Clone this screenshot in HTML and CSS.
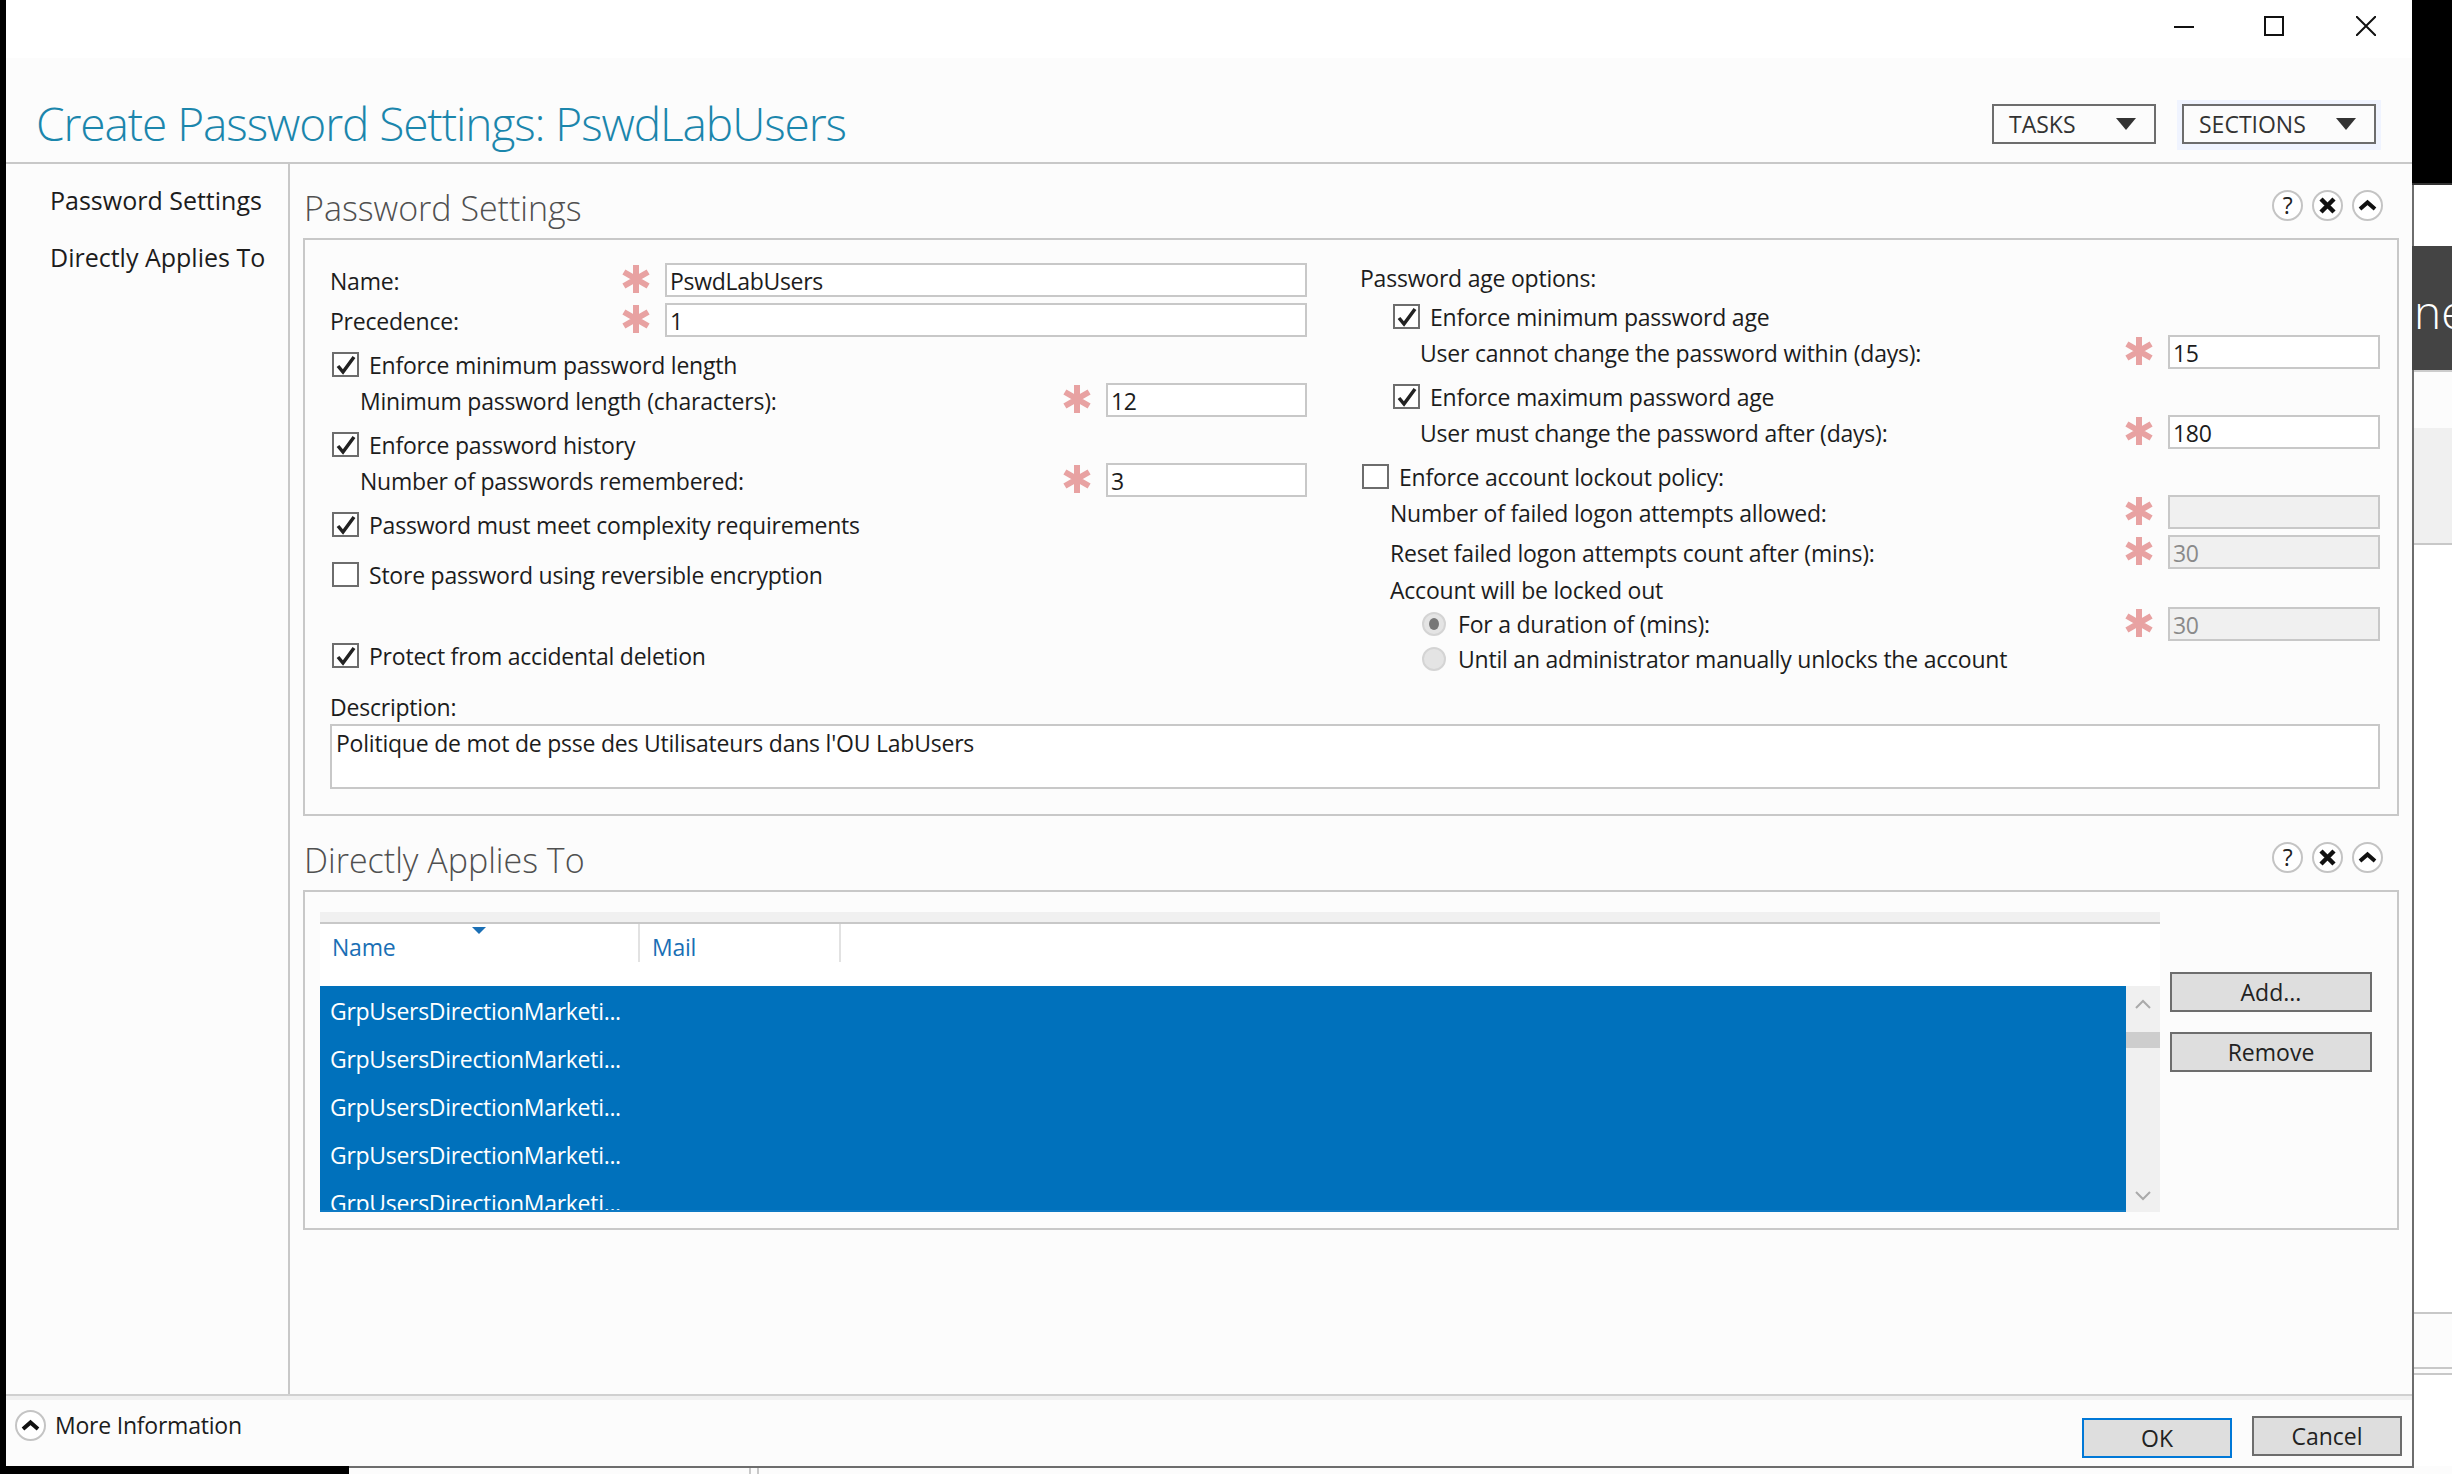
FILE: index.html
```html
<!DOCTYPE html>
<html lang="en">
<head>
    <meta charset="UTF-8">
    <title>Create Password Settings: PswdLabUsers</title>
    <link rel="stylesheet" href="styles.css">
</head>
<body>

<svg class="defs" aria-hidden="true">
    <symbol id="star" viewBox="0 0 28 28">
        <path d="M14 0V28M1.9 7L26.1 21M1.9 21L26.1 7" fill="none" stroke="#e8a2a2" stroke-width="6"/>
    </symbol>
    <symbol id="tick" viewBox="0 0 23 21">
        <path d="M4 12L9 18L20 3" fill="none" stroke="#222" stroke-width="3.5"/>
    </symbol>
    <symbol id="cross" viewBox="0 0 27 27">
        <path d="M7 7L20 20M20 7L7 20" fill="none" stroke="#111" stroke-width="4.5"/>
    </symbol>
    <symbol id="caret" viewBox="0 0 27 27">
        <path d="M6 17L13.5 10.5L21 17" fill="none" stroke="#111" stroke-width="4"/>
    </symbol>
</svg>

<div class="screen">
    <div class="top">
        <div class="window">
            <div class="titlebar">
                <svg class="ctl" viewBox="0 0 20 20"><path d="M0 11H20" stroke="#111" stroke-width="2"/></svg>
                <svg class="ctl" viewBox="0 0 20 20"><rect x="1" y="1" width="18" height="18" fill="none" stroke="#111" stroke-width="2"/></svg>
                <svg class="ctl close" viewBox="0 0 20 20"><path d="M0 0L20 20M20 0L0 20" stroke="#111" stroke-width="2"/></svg>
            </div>

            <div class="header">
                <h1 class="title">Create Password Settings: PswdLabUsers</h1>
                <div class="drop"><span>TASKS</span><i class="arrow"></i></div>
                <div class="drop focus"><span>SECTIONS</span><i class="arrow"></i></div>
            </div>

            <div class="main">
                <div class="sidebar">
                    <div class="side-item">Password Settings</div>
                    <div class="side-item">Directly Applies To</div>
                </div>

                <div class="content">
                    <div class="sec-head">
                        <h2>Password Settings</h2>
                        <div class="round"><span class="help">?</span></div>
                        <div class="round"><svg><use href="#cross"/></svg></div>
                        <div class="round"><svg><use href="#caret"/></svg></div>
                    </div>

                    <div class="panel form-panel">
                        <div class="cols">
                            <div class="col-left">
                                <div class="field">
                                    <label>Name:</label>
                                    <svg class="star"><use href="#star"/></svg>
                                    <input class="wide" type="text" value="PswdLabUsers">
                                </div>
                                <div class="field next">
                                    <label>Precedence:</label>
                                    <svg class="star"><use href="#star"/></svg>
                                    <input class="wide" type="text" value="1">
                                </div>
                                <div class="check"><span class="box"><svg><use href="#tick"/></svg></span>Enforce minimum password length</div>
                                <div class="field">
                                    <label class="sub">Minimum password length (characters):</label>
                                    <svg class="star"><use href="#star"/></svg>
                                    <input class="small" type="text" value="12">
                                </div>
                                <div class="check"><span class="box"><svg><use href="#tick"/></svg></span>Enforce password history</div>
                                <div class="field">
                                    <label class="sub">Number of passwords remembered:</label>
                                    <svg class="star"><use href="#star"/></svg>
                                    <input class="small" type="text" value="3">
                                </div>
                                <div class="check"><span class="box"><svg><use href="#tick"/></svg></span>Password must meet complexity requirements</div>
                                <div class="check store"><span class="box"></span>Store password using reversible encryption</div>
                                <div class="check protect"><span class="box"><svg><use href="#tick"/></svg></span>Protect from accidental deletion</div>
                            </div>

                            <div class="col-right">
                                <div class="plain">Password age options:</div>
                                <div class="check in1 first"><span class="box"><svg><use href="#tick"/></svg></span>Enforce minimum password age</div>
                                <div class="field">
                                    <label class="in2">User cannot change the password within (days):</label>
                                    <svg class="star"><use href="#star"/></svg>
                                    <input class="num" type="text" value="15">
                                </div>
                                <div class="check in1"><span class="box"><svg><use href="#tick"/></svg></span>Enforce maximum password age</div>
                                <div class="field">
                                    <label class="in2">User must change the password after (days):</label>
                                    <svg class="star"><use href="#star"/></svg>
                                    <input class="num" type="text" value="180">
                                </div>
                                <div class="check"><span class="box"></span>Enforce account lockout policy:</div>
                                <div class="field">
                                    <label class="in3">Number of failed logon attempts allowed:</label>
                                    <svg class="star"><use href="#star"/></svg>
                                    <input class="num" type="text" value="" disabled>
                                </div>
                                <div class="field next">
                                    <label class="in3">Reset failed logon attempts count after (mins):</label>
                                    <svg class="star"><use href="#star"/></svg>
                                    <input class="num" type="text" value="30" disabled>
                                </div>
                                <div class="plain in3 locked">Account will be locked out</div>
                                <div class="field">
                                    <label class="radio-label"><span class="radio on"></span>For a duration of (mins):</label>
                                    <svg class="star"><use href="#star"/></svg>
                                    <input class="num" type="text" value="30" disabled>
                                </div>
                                <div class="radio-label last"><span class="radio"></span>Until an administrator manually unlocks the account</div>
                            </div>
                        </div>

                        <div class="desc-label">Description:</div>
                        <div class="desc">Politique de mot de psse des Utilisateurs dans l'OU LabUsers</div>
                    </div>

                    <div class="sec-head">
                        <h2>Directly Applies To</h2>
                        <div class="round"><span class="help">?</span></div>
                        <div class="round"><svg><use href="#cross"/></svg></div>
                        <div class="round"><svg><use href="#caret"/></svg></div>
                    </div>

                    <div class="panel list-panel">
                        <div class="list">
                            <div class="list-strip"></div>
                            <div class="list-head">
                                <div class="col-name">Name<i class="sort"></i></div>
                                <div class="col-mail">Mail</div>
                            </div>
                            <div class="list-body">
                                <div class="rows">
                                    <div class="list-row">GrpUsersDirectionMarketi...</div>
                                    <div class="list-row">GrpUsersDirectionMarketi...</div>
                                    <div class="list-row">GrpUsersDirectionMarketi...</div>
                                    <div class="list-row">GrpUsersDirectionMarketi...</div>
                                    <div class="list-row">GrpUsersDirectionMarketi...</div>
                                </div>
                                <div class="scroll">
                                    <svg class="chev" viewBox="0 0 16 10"><path d="M1 9L8 2L15 9" fill="none" stroke="#aaa" stroke-width="2"/></svg>
                                    <div class="thumb"></div>
                                    <svg class="chev down" viewBox="0 0 16 10"><path d="M1 1L8 8L15 1" fill="none" stroke="#aaa" stroke-width="2"/></svg>
                                </div>
                            </div>
                        </div>
                        <div class="list-btns">
                            <button class="btn">Add...</button>
                            <button class="btn">Remove</button>
                        </div>
                    </div>
                </div>
            </div>

            <div class="footer">
                <div class="more">
                    <div class="round"><svg><use href="#caret"/></svg></div>
                    <span>More Information</span>
                </div>
                <button class="btn ok">OK</button>
                <button class="btn cancel">Cancel</button>
            </div>
        </div>

        <div class="behind">
            <div class="behind-black"></div>
            <div class="behind-lower">
                <div class="b-white"></div>
                <div class="b-dark">ne</div>
                <div class="b-pale"></div>
                <div class="b-gray"></div>
                <div class="b-line"></div>
                <div class="b-line2"></div>
                <div class="b-line3"></div>
            </div>
        </div>
    </div>

    <div class="strip">
        <div class="strip-black"></div>
        <div class="strip-rest"><i></i><i></i></div>
    </div>
</div>

</body>
</html>
```

FILE: styles.css
```css
* {
    box-sizing: border-box;
}
body {
    margin: 0;
    background-color: #fcfcfc;
    font-family: "Open Sans", "Noto Sans", sans-serif;
    font-size: 23px;
    letter-spacing: -0.22px;
    color: #1c1c1c;
}
.defs {
    position: absolute;
    width: 0;
    height: 0;
}
.screen {
    width: 2452px;
    height: 1474px;
    overflow: hidden;
}
.top {
    display: flex;
    height: 1466px;
}

/* window */
.window {
    width: 2412px;
    display: flex;
    flex-direction: column;
    border-left: 6px solid #000;
    background-color: #fcfcfc;
}
.titlebar {
    height: 58px;
    background-color: #fff;
    display: flex;
    justify-content: flex-end;
    align-items: flex-start;
    gap: 70px;
    padding: 16px 36px 0 0;
}
.ctl {
    width: 20px;
    height: 20px;
}
.ctl.close {
    margin-left: 2px;
}
.header {
    height: 106px;
    border-bottom: 2px solid #c8c8c8;
    display: flex;
    align-items: center;
    padding: 28px 36px 0 30px;
    gap: 26px;
}
.title {
    flex: 1;
    margin: -2px 0 0;
    font-size: 46px;
    font-weight: 300;
    letter-spacing: -1.07px;
    color: #1b86ac;
}
.drop {
    height: 40px;
    display: flex;
    align-items: center;
    justify-content: space-between;
    padding: 0 18px 0 15px;
    border: 2px solid #6d6d6d;
    font-size: 23px;
    letter-spacing: 0;
    color: #333;
}
.drop:first-of-type {
    width: 164px;
}
.drop.focus {
    width: 194px;
    box-shadow: 0 1px 0 5px #f0f4ff;
}
.arrow {
    width: 0;
    height: 0;
    border-left: 10px solid transparent;
    border-right: 10px solid transparent;
    border-top: 12px solid #333;
}

/* left nav + sections */
.main {
    flex: 1;
    display: flex;
    min-height: 0;
}
.sidebar {
    width: 284px;
    border-right: 2px solid #c8c8c8;
    padding: 8px 0 0 44px;
}
.side-item {
    height: 57px;
    line-height: 56px;
    font-size: 25px;
    letter-spacing: 0;
    white-space: nowrap;
}
.content {
    flex: 1;
    padding: 0 13px;
}
.sec-head {
    height: 74px;
    display: flex;
    align-items: flex-end;
    gap: 9px;
    padding: 0 16px 17px 1px;
}
.sec-head h2 {
    flex: 1;
    margin: 0 0 -10px;
    font-size: 34px;
    font-weight: 300;
    letter-spacing: 0;
    color: #505050;
}
.round {
    width: 31px;
    height: 31px;
    border-radius: 50%;
    border: 2px solid #c4c4c4;
    background-color: #fff;
    display: flex;
    align-items: center;
    justify-content: center;
}
.round svg {
    width: 27px;
    height: 27px;
}
.help {
    font-size: 23px;
    line-height: 1;
    color: #222;
}
.panel {
    border: 2px solid #c8c8c8;
}

/* form */
.form-panel {
    height: 578px;
    padding: 23px 17px 0 25px;
}
.cols {
    display: flex;
    justify-content: space-between;
}
.col-left {
    width: 977px;
}
.col-right {
    width: 1020px;
}
.field {
    height: 34px;
    display: flex;
    align-items: center;
}
.field.next {
    margin-top: 6px;
}
.field label {
    flex: 1;
    white-space: nowrap;
    padding-top: 2px;
}
.field .sub {
    padding-left: 30px;
}
.field .in2 {
    padding-left: 60px;
}
.field .in3 {
    padding-left: 30px;
}
.field .radio-label {
    padding-top: 0;
    padding-left: 62px;
}
.star {
    width: 28px;
    height: 28px;
    margin-right: 15px;
    margin-top: -2px;
}
input {
    height: 34px;
    border: 2px solid #c8c8c8;
    background-color: #fff;
    padding: 2px 3px 0;
    font-family: inherit;
    font-size: 23px;
    letter-spacing: -0.3px;
    color: #1c1c1c;
}
input:disabled {
    background-color: #f0f0f0;
    color: #8a8a8a;
}
.wide {
    width: 642px;
}
.small {
    width: 201px;
}
.num {
    width: 212px;
}
.check {
    height: 25px;
    display: flex;
    align-items: center;
    margin: 15px 0 6px 2px;
    white-space: nowrap;
}
.check.store {
    margin-top: 25px;
}
.check.protect {
    margin-top: 56px;
    margin-bottom: 0;
}
.box {
    width: 27px;
    height: 25px;
    border: 2px solid #6d6d6d;
    background-color: #fff;
    margin-right: 10px;
    flex-shrink: 0;
}
.box svg {
    display: block;
    width: 23px;
    height: 21px;
}
.plain {
    height: 30px;
    line-height: 30px;
    white-space: nowrap;
}
.check.in1 {
    margin-left: 33px;
}
.check.first {
    margin-top: 11px;
}
.plain.in3 {
    padding-left: 30px;
}
.plain.locked {
    margin: 6px 0 2px;
}
.radio-label {
    display: flex;
    align-items: center;
    padding-left: 62px;
    white-space: nowrap;
}
.radio-label.last {
    height: 28px;
    margin-top: 4px;
}
.radio {
    width: 24px;
    height: 24px;
    border-radius: 50%;
    background-color: #e4e4e4;
    border: 2px solid #d4d4d4;
    margin-right: 12px;
    flex-shrink: 0;
    display: flex;
    align-items: center;
    justify-content: center;
}
.radio.on::after {
    content: "";
    width: 10px;
    height: 12px;
    border-radius: 50%;
    background-color: #777;
}
.desc-label {
    height: 30px;
    line-height: 30px;
    margin-top: 19px;
}
.desc {
    height: 65px;
    margin-top: 2px;
    padding: 1px 4px;
    border: 2px solid #c8c8c8;
    background-color: #fff;
    white-space: nowrap;
}

/* members list */
.list-panel {
    height: 340px;
    display: flex;
    padding: 20px 0 0 15px;
}
.list {
    width: 1840px;
    height: 300px;
    display: flex;
    flex-direction: column;
}
.list-strip {
    height: 12px;
    background-color: #f0f0f0;
    border-bottom: 2px solid #c8c8c8;
}
.list-head {
    height: 62px;
    background-color: #fff;
    display: flex;
    align-items: flex-start;
    color: #1a6fb5;
}
.col-name,
.col-mail {
    position: relative;
    height: 38px;
    line-height: 46px;
    border-right: 2px solid #e2e2e2;
}
.col-name {
    width: 320px;
    padding-left: 12px;
}
.col-mail {
    width: 201px;
    padding-left: 12px;
}
.sort {
    position: absolute;
    left: 152px;
    top: 3px;
    width: 0;
    height: 0;
    border-left: 7px solid transparent;
    border-right: 7px solid transparent;
    border-top: 7px solid #1a6fb5;
}
.list-body {
    flex: 1;
    min-height: 0;
    display: flex;
}
.rows {
    flex: 1;
    overflow: hidden;
    padding: 1px 0 0 10px;
    background-color: #0071bc;
    border-bottom: 2px solid #0d7ac4;
    color: #fff;
    letter-spacing: -0.3px;
}
.list-row {
    height: 48px;
    line-height: 48px;
    white-space: nowrap;
}
.scroll {
    width: 34px;
    background-color: #f0f0f0;
    display: flex;
    flex-direction: column;
    align-items: center;
}
.chev {
    width: 16px;
    height: 10px;
    margin: 13px 0 23px;
}
.chev.down {
    margin: auto 0 11px;
}
.thumb {
    width: 100%;
    height: 16px;
    background-color: #cdcdcd;
}
.list-btns {
    margin: 60px 0 0 10px;
    display: flex;
    flex-direction: column;
    gap: 20px;
}
.btn {
    width: 202px;
    height: 40px;
    padding: 0;
    border: 2px solid #6d6d6d;
    background-color: #dedede;
    font-family: inherit;
    font-size: 23px;
    color: #222;
}

/* footer */
.footer {
    height: 72px;
    border-top: 2px solid #d0d0d0;
    box-shadow: inset 0 4px 0 #f0f0f0;
    display: flex;
    align-items: flex-start;
    padding: 20px 10px 0 0;
}
.more {
    flex: 1;
    margin: -7px 0 0 9px;
    display: flex;
    align-items: center;
    gap: 9px;
}
.btn.ok {
    width: 150px;
    margin-top: 2px;
    border-color: #0078d7;
}
.btn.cancel {
    width: 150px;
    margin-left: 20px;
}

/* what shows behind the window */
.behind {
    flex: 1;
    display: flex;
    flex-direction: column;
    overflow: hidden;
}
.behind-black {
    height: 185px;
    background-color: #000;
    border-bottom: 2px solid #333;
}
.behind-lower {
    flex: 1;
    border-left: 2px solid #6d6d6d;
    background-color: #fff;
}
.b-white {
    height: 61px;
}
.b-dark {
    height: 124px;
    background-color: #444;
    margin-left: -2px;
    padding-left: 2px;
    font-size: 46px;
    font-weight: 300;
    letter-spacing: 0;
    line-height: 130px;
    color: #fff;
    white-space: nowrap;
    overflow: hidden;
}
.b-pale {
    height: 58px;
    border-top: 2px solid #ccc;
    background-color: #fcfcfc;
}
.b-gray {
    height: 117px;
    background-color: #f0f0f0;
    border-bottom: 2px solid #c8c8c8;
}
.b-line {
    height: 769px;
    border-bottom: 2px solid #c8c8c8;
}
.b-line2 {
    height: 55px;
    background-color: #fcfcfc;
    border-bottom: 2px solid #c8c8c8;
}
.b-line3 {
    height: 6px;
    background-color: #fcfcfc;
    border-bottom: 2px solid #c8c8c8;
}

/* bottom edge */
.strip {
    height: 8px;
    display: flex;
}
.strip-black {
    width: 349px;
    background-color: #000;
}
.strip-rest {
    width: 2065px;
    border-top: 2px solid #6d6d6d;
    padding-left: 400px;
    display: flex;
    gap: 6px;
}
.strip-rest i {
    width: 2px;
    background-color: #c8c8c8;
}
```
